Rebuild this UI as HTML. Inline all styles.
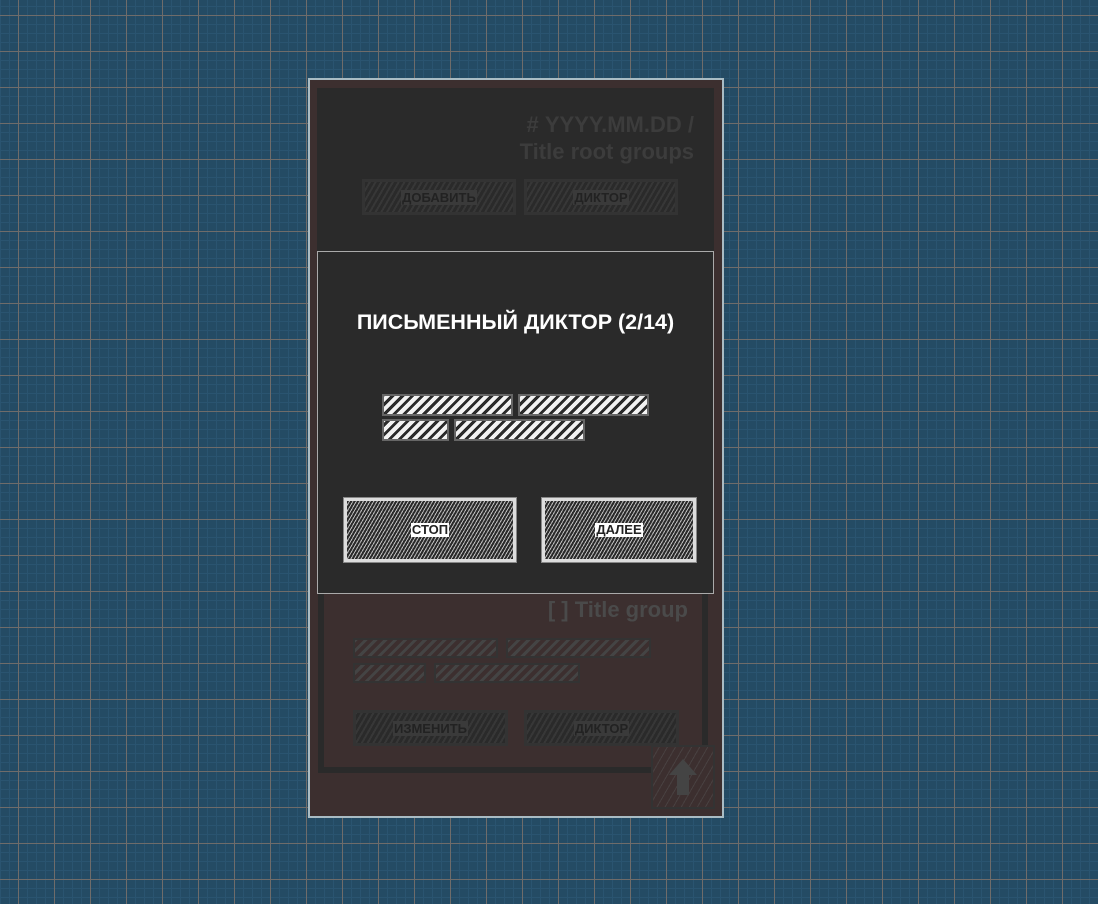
<!DOCTYPE html>
<html><head><meta charset="utf-8"><style>
*{margin:0;padding:0;box-sizing:border-box}
body{width:1098px;height:904px;overflow:hidden;position:relative;font-family:"Liberation Sans",sans-serif;font-weight:bold;
background-color:#244b64;
background-image:
linear-gradient(90deg,#6f6c6a 1px,transparent 1px),
linear-gradient(0deg,#6f6c6a 1px,transparent 1px),
linear-gradient(90deg,#2a5470 1px,transparent 1px),
linear-gradient(0deg,#2a5470 1px,transparent 1px);
background-size:36px 36px,36px 36px,9px 9px,9px 9px;
background-position:18px 0,0 16px,0 0,0 7px;}
.a{position:absolute}
.wb{background:repeating-linear-gradient(-45deg,#f2f2f2 0 4px,#2a2a2a 4px 7px);border:2px solid #666}
.btnL{background:repeating-linear-gradient(-60deg,#2a2a2a 0 2px,#bbb 2px 3px);border:3px solid #ddd;outline:1px solid #888;display:flex;align-items:center;justify-content:center}
.btnL span{background:#fff;color:#222;font-size:13px;padding:0 1px;line-height:14px}
.db{border:3px solid #333;display:flex;align-items:center;justify-content:center;background:repeating-linear-gradient(-60deg,#2a2a2a 0 3px,#373737 3px 5px)}
.db span{background:#3a3a3a;color:#222;font-size:13px;padding:0 1px}
.sb{border:2px solid #333;background:repeating-linear-gradient(-45deg,#3c2f2f 0 4px,#444 4px 7px)}
</style></head><body>
<div class="a" style="left:308px;top:78px;width:416px;height:740px;background:#3c2f2f;border:2px solid #a9bcc4"></div>
<div class="a" style="left:317px;top:88px;width:397px;height:164px;background:#2a2a2a"></div>
<div class="a" style="left:330px;top:111px;width:364px;text-align:right;color:#3c3c3c;font-size:22px;line-height:27px">#&nbsp;YYYY.MM.DD /<br>Title root groups</div>
<div class="a db" style="left:362px;top:179px;width:154px;height:36px"><span>ДОБАВИТЬ</span></div>
<div class="a db" style="left:524px;top:179px;width:154px;height:36px"><span>ДИКТОР</span></div>

<div class="a" style="left:318px;top:593px;width:390px;height:180px;border:6px solid #2a2a2a;border-top:none;background:#3c2f2f"></div>
<div class="a" style="left:330px;top:597px;width:358px;text-align:right;color:#4a4a4a;font-size:22px">[ ] Title group</div>
<div class="a sb" style="left:353px;top:638px;width:145px;height:20px"></div>
<div class="a sb" style="left:506px;top:638px;width:145px;height:20px"></div>
<div class="a sb" style="left:353px;top:663px;width:73px;height:20px"></div>
<div class="a sb" style="left:434px;top:663px;width:146px;height:20px"></div>
<div class="a db" style="left:353px;top:710px;width:155px;height:36px"><span>ИЗМЕНИТЬ</span></div>
<div class="a db" style="left:524px;top:710px;width:155px;height:36px"><span>ДИКТОР</span></div>
<div class="a" style="left:651px;top:745px;width:64px;height:64px;border:2px solid #333;background:repeating-linear-gradient(-60deg,#3c2f2f 0 6px,#484040 6px 7px)">
<svg width="60" height="60" viewBox="0 0 60 60" class="a" style="left:0;top:0"><path d="M30 12 L44 28 L36 28 L36 48 L24 48 L24 28 L16 28Z" fill="#444"/></svg></div>

<div class="a" style="left:317px;top:251px;width:397px;height:343px;background:#2a2a2a;border:1px solid #aaa"></div>
<div class="a" style="left:317px;top:310px;width:397px;text-align:center;color:#fff;font-size:21.5px">ПИСЬМЕННЫЙ ДИКТОР (2/14)</div>
<div class="a wb" style="left:382px;top:394px;width:131px;height:22px"></div>
<div class="a wb" style="left:518px;top:394px;width:131px;height:22px"></div>
<div class="a wb" style="left:382px;top:419px;width:67px;height:22px"></div>
<div class="a wb" style="left:454px;top:419px;width:131px;height:22px"></div>
<div class="a btnL" style="left:344px;top:498px;width:172px;height:64px"><span>СТОП</span></div>
<div class="a btnL" style="left:542px;top:498px;width:154px;height:64px"><span>ДАЛЕЕ</span></div>
</body></html>
